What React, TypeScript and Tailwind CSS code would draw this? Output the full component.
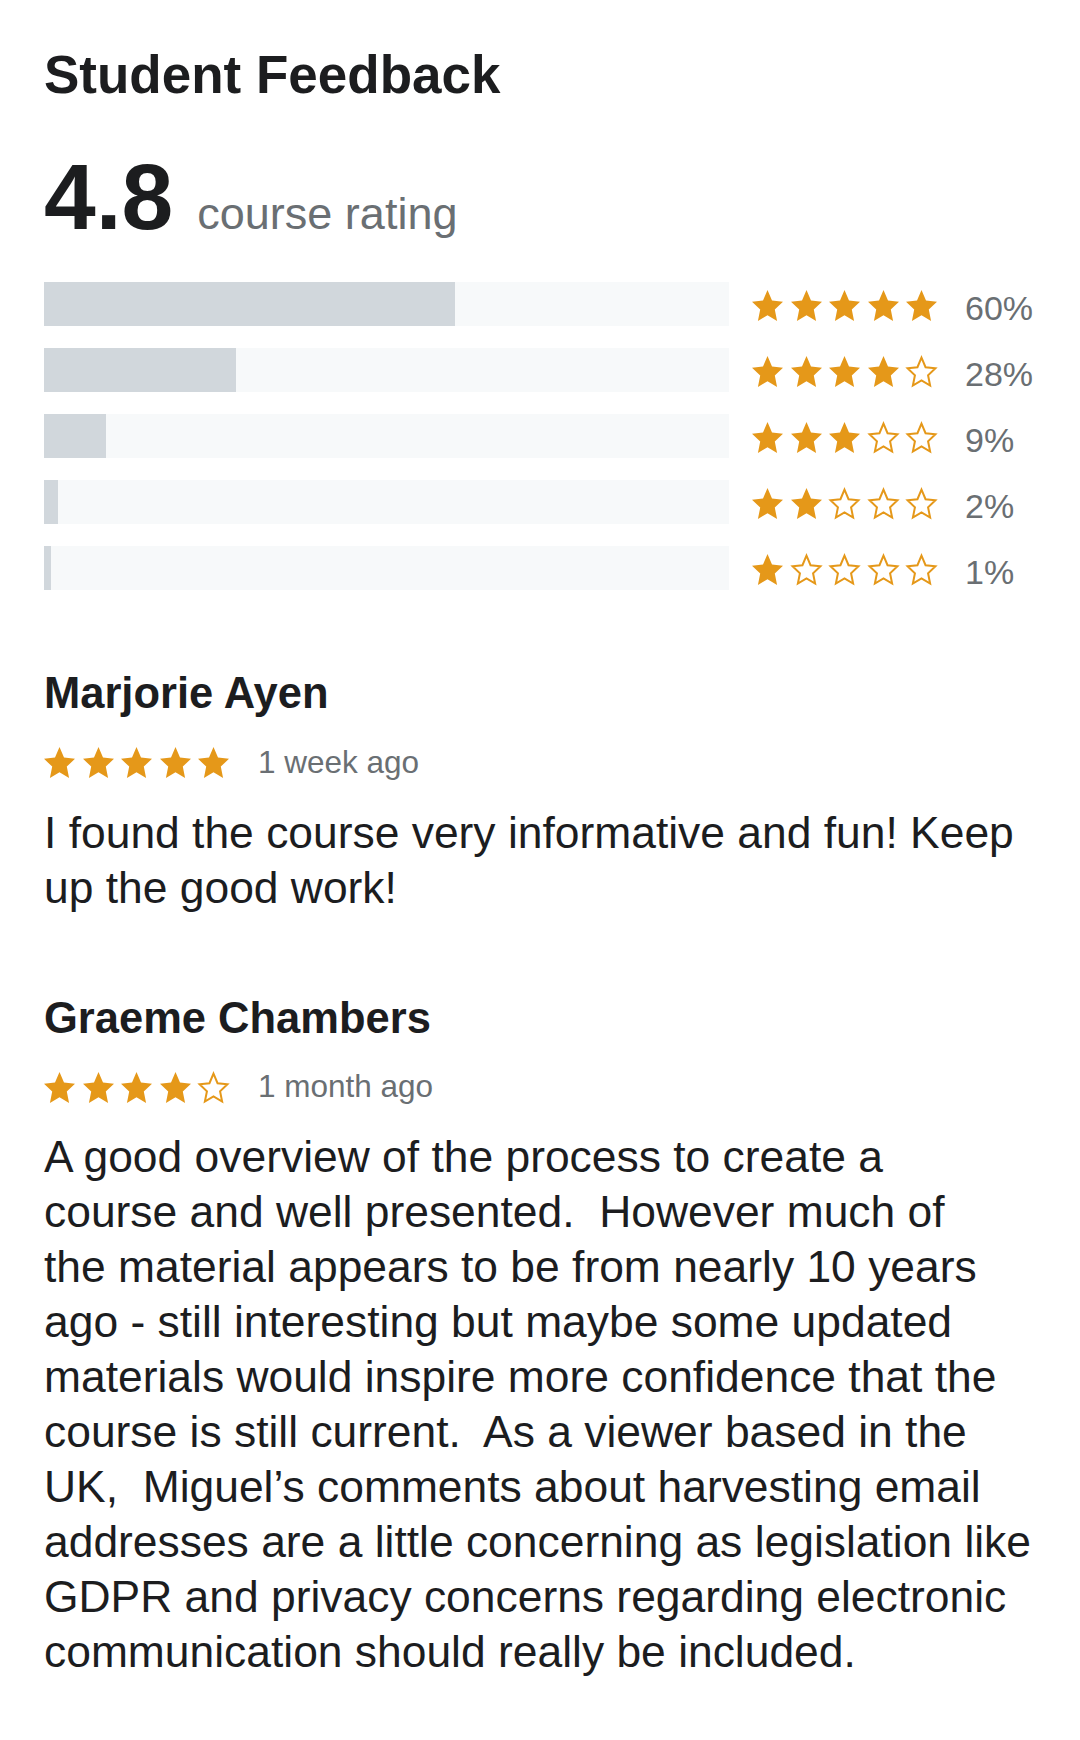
import React from "react";

const STAR_POINTS =
  "15.5,0 20,10.62 31,11.83 22.79,19.62 25.08,31 15.5,25.18 5.92,31 8.21,19.62 0,11.83 11,10.62";

function Star({ filled }: { filled: boolean }) {
  return (
    <svg width="31" height="31" viewBox="0 0 31 31" className="block shrink-0 overflow-visible">
      {filled ? (
        <polygon points={STAR_POINTS} fill="#e59819" />
      ) : (
        <g transform="translate(15.5 16.5) scale(0.9) translate(-15.5 -16.5)">
          <polygon
            points={STAR_POINTS}
            fill="none"
            stroke="#e59819"
            strokeWidth="2.2"
            strokeLinejoin="miter"
          />
        </g>
      )}
    </svg>
  );
}

function Stars({ count }: { count: number }) {
  return (
    <div className="flex gap-[7.5px]">
      {[0, 1, 2, 3, 4].map((i) => (
        <Star key={i} filled={i < count} />
      ))}
    </div>
  );
}

const bars = [
  { stars: 5, pct: 60 },
  { stars: 4, pct: 28 },
  { stars: 3, pct: 9 },
  { stars: 2, pct: 2 },
  { stars: 1, pct: 1 },
];

const reviews = [
  {
    name: "Marjorie Ayen",
    stars: 5,
    when: "1 week ago",
    lines: ["I found the course very informative and fun! Keep", "up the good work!"],
  },
  {
    name: "Graeme Chambers",
    stars: 4,
    when: "1 month ago",
    lines: [
      "A good overview of the process to create a",
      "course and well presented.  However much of",
      "the material appears to be from nearly 10 years",
      "ago - still interesting but maybe some updated",
      "materials would inspire more confidence that the",
      "course is still current.  As a viewer based in the",
      "UK,  Miguel\u2019s comments about harvesting email",
      "addresses are a little concerning as legislation like",
      "GDPR and privacy concerns regarding electronic",
      "communication should really be included.",
    ],
  },
];

export default function App() {
  return (
    <div className="min-h-[1740px] bg-white px-[44px] pt-[48px] text-[#1c1d1f] font-['Liberation_Sans',Arial,sans-serif]">
      <h2 className="text-[53px] leading-[53px] font-bold">Student Feedback</h2>

      <div className="mt-[50px] flex items-baseline gap-[24px]">
        <span className="text-[93px] leading-[93px] font-bold">4.8</span>
        <span className="text-[45px] leading-[45px] text-[#6a6f73]">course rating</span>
      </div>

      <div className="mt-[38px] flex flex-col gap-[22px]">
        {bars.map((b) => (
          <div key={b.stars} className="flex h-[44px] items-center">
            <div className="h-[44px] w-[685px] shrink-0 bg-[#f7f9fa]">
              <div className="h-full bg-[#d1d7dc]" style={{ width: `${b.pct}%` }} />
            </div>
            <div className="ml-[23px] pt-[3px]">
              <Stars count={b.stars} />
            </div>
            <span className="ml-[28px] pt-[8px] text-[34px] leading-[34px] text-[#6a6f73]">{b.pct}%</span>
          </div>
        ))}
      </div>

      {reviews.map((r) => (
        <div key={r.name} className="mt-[82px]">
          <div className="text-[43.5px] leading-[43.5px] font-bold">{r.name}</div>
          <div className="mt-[31px] flex h-[32px] items-center gap-[29px]">
            <Stars count={r.stars} />
            <span className="text-[31.5px] leading-[31.5px] text-[#6a6f73]">{r.when}</span>
          </div>
          <div className="mt-[26px] text-[44.4px] leading-[55px]">
            {r.lines.map((l, i) => (
              <div key={i} className="whitespace-pre">
                {l}
              </div>
            ))}
          </div>
        </div>
      ))}
    </div>
  );
}
